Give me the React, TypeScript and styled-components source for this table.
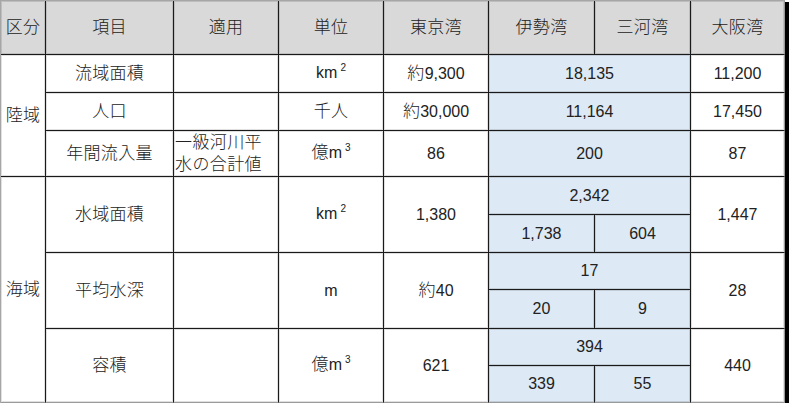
import React from 'react';
import styled, { createGlobalStyle } from 'styled-components';

const Global = createGlobalStyle`
  html, body { margin: 0; padding: 0; background: #fff; }
  body { font-family: "Liberation Sans", "Noto Sans CJK JP", sans-serif; }
`;

const Sheet = styled.table`
  border-collapse: separate;
  border-spacing: 0;
  table-layout: fixed;
  width: 785px;
  border-top: 1px solid #a6a6a6;
  border-left: 1px solid #a6a6a6;
  box-shadow: 3px 3px 0 1px #000;
  font-size: 16px;
  color: #222;
`;

type Tone = 'head' | 'blue' | 'plain';

const Cell = styled.td<{
  $tone?: Tone;
  $w?: number;
  $h?: number;
  $edgeR?: boolean;
  $edgeB?: boolean;
  $left?: boolean;
}>`
  box-sizing: border-box;
  padding: 0;
  border-right: 1px solid ${(p) => (p.$edgeR ? '#9a9a9a' : '#1a1a1a')};
  border-bottom: 1px solid ${(p) => (p.$edgeB ? '#9a9a9a' : '#1a1a1a')};
  background: ${(p) =>
    p.$tone === 'head' ? '#d9d9d9' : p.$tone === 'blue' ? '#dde9f5' : '#ffffff'};
  text-align: ${(p) => (p.$left ? 'left' : 'center')};
  vertical-align: middle;
  line-height: 18px;
  white-space: nowrap;
  overflow: hidden;
  box-shadow: inset 0 0 0 1px rgba(0, 0, 0, 0.12);
  ${(p) => (p.$w ? `width: ${p.$w}px;` : '')}
  ${(p) => (p.$h ? `height: ${p.$h}px;` : '')}
`;

const Jp = styled.span`
  font-size: 17px;
  font-weight: 300;
  letter-spacing: 0.3px;
`;

const Note = styled.span`
  display: block;
  font-size: 17px;
  font-weight: 300;
  letter-spacing: 0.4px;
  line-height: 22px;
  padding-left: 1px;
`;

const Sup = styled.span`
  position: relative;
  top: -7px;
  margin-left: 3px;
  font-size: 10px;
`;

const Num = styled.span`
  font-size: 16px;
`;

export default function App() {
  return (
    <>
      <Global />
      <Sheet>
        <tbody>
          <tr>
            <Cell $tone="head" $w={45} $h={54}><Jp>区分</Jp></Cell>
            <Cell $tone="head" $w={128}><Jp>項目</Jp></Cell>
            <Cell $tone="head" $w={105}><Jp>適用</Jp></Cell>
            <Cell $tone="head" $w={105}><Jp>単位</Jp></Cell>
            <Cell $tone="head" $w={105}><Jp>東京湾</Jp></Cell>
            <Cell $tone="head" $w={106}><Jp>伊勢湾</Jp></Cell>
            <Cell $tone="head" $w={96}><Jp>三河湾</Jp></Cell>
            <Cell $tone="head" $w={94} $edgeR><Jp>大阪湾</Jp></Cell>
          </tr>
          <tr>
            <Cell rowSpan={3}><Jp>陸域</Jp></Cell>
            <Cell $h={38}><Jp>流域面積</Jp></Cell>
            <Cell />
            <Cell><Num>km</Num><Sup>2</Sup></Cell>
            <Cell><Jp>約</Jp><Num>9,300</Num></Cell>
            <Cell $tone="blue" colSpan={2}><Num>18,135</Num></Cell>
            <Cell $edgeR><Num>11,200</Num></Cell>
          </tr>
          <tr>
            <Cell $h={38}><Jp>人口</Jp></Cell>
            <Cell />
            <Cell><Jp>千人</Jp></Cell>
            <Cell><Jp>約</Jp><Num>30,000</Num></Cell>
            <Cell $tone="blue" colSpan={2}><Num>11,164</Num></Cell>
            <Cell $edgeR><Num>17,450</Num></Cell>
          </tr>
          <tr>
            <Cell $h={46}><Jp>年間流入量</Jp></Cell>
            <Cell $left>
              <Note>一級河川平</Note>
              <Note>水の合計値</Note>
            </Cell>
            <Cell><Jp>億</Jp><Num>m</Num><Sup>3</Sup></Cell>
            <Cell><Num>86</Num></Cell>
            <Cell $tone="blue" colSpan={2}><Num>200</Num></Cell>
            <Cell $edgeR><Num>87</Num></Cell>
          </tr>
          <tr>
            <Cell rowSpan={6} $edgeB><Jp>海域</Jp></Cell>
            <Cell rowSpan={2}><Jp>水域面積</Jp></Cell>
            <Cell rowSpan={2} />
            <Cell rowSpan={2}><Num>km</Num><Sup>2</Sup></Cell>
            <Cell rowSpan={2}><Num>1,380</Num></Cell>
            <Cell $tone="blue" colSpan={2} $h={38}><Num>2,342</Num></Cell>
            <Cell rowSpan={2} $edgeR><Num>1,447</Num></Cell>
          </tr>
          <tr>
            <Cell $tone="blue" $h={38}><Num>1,738</Num></Cell>
            <Cell $tone="blue"><Num>604</Num></Cell>
          </tr>
          <tr>
            <Cell rowSpan={2}><Jp>平均水深</Jp></Cell>
            <Cell rowSpan={2} />
            <Cell rowSpan={2}><Num>m</Num></Cell>
            <Cell rowSpan={2}><Jp>約</Jp><Num>40</Num></Cell>
            <Cell $tone="blue" colSpan={2} $h={37}><Num>17</Num></Cell>
            <Cell rowSpan={2} $edgeR><Num>28</Num></Cell>
          </tr>
          <tr>
            <Cell $tone="blue" $h={39}><Num>20</Num></Cell>
            <Cell $tone="blue"><Num>9</Num></Cell>
          </tr>
          <tr>
            <Cell rowSpan={2} $edgeB><Jp>容積</Jp></Cell>
            <Cell rowSpan={2} $edgeB />
            <Cell rowSpan={2} $edgeB><Jp>億</Jp><Num>m</Num><Sup>3</Sup></Cell>
            <Cell rowSpan={2} $edgeB><Num>621</Num></Cell>
            <Cell $tone="blue" colSpan={2} $h={37}><Num>394</Num></Cell>
            <Cell rowSpan={2} $edgeR $edgeB><Num>440</Num></Cell>
          </tr>
          <tr>
            <Cell $tone="blue" $h={37} $edgeB><Num>339</Num></Cell>
            <Cell $tone="blue" $edgeB><Num>55</Num></Cell>
          </tr>
        </tbody>
      </Sheet>
    </>
  );
}
